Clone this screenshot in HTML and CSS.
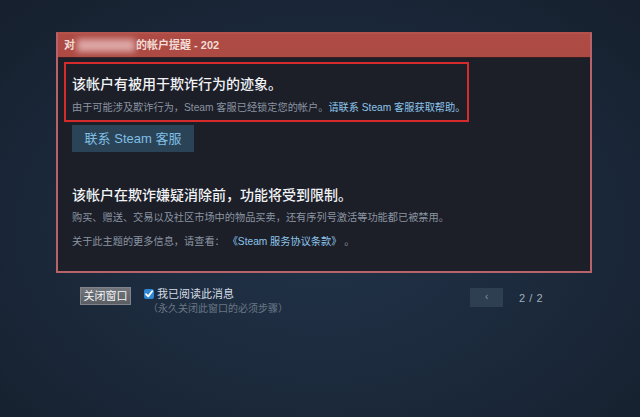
FILE: index.html
```html
<!DOCTYPE html>
<html lang="zh-CN">
<head>
<meta charset="utf-8">
<link rel="stylesheet" href="styles.css">
</head>
<body>
<div class="stage">
  <div class="dialog">
    <div class="dialog-title">对<span class="redact"></span>的帐户提醒 - 202</div>
    <div class="dialog-body">
      <div class="alert-box">
        <div class="heading">该帐户有被用于欺诈行为的迹象。</div>
        <div class="text first">由于可能涉及欺诈行为，Steam 客服已经锁定您的帐户。<span class="link">请联系 Steam 客服获取帮助。</span></div>
      </div>
      <div class="support-btn">联系 Steam 客服</div>
      <div class="heading second">该帐户在欺诈嫌疑消除前，功能将受到限制。</div>
      <div class="text gap-s">购买、赠送、交易以及社区市场中的物品买卖，还有序列号激活等功能都已被禁用。</div>
      <div class="text gap-m">关于此主题的更多信息，请查看： <span class="link">《Steam 服务协议条款》</span> 。</div>
    </div>
  </div>
  <div class="footer">
    <div class="footer-left">
      <div class="close-btn">关闭窗口</div>
      <div class="ack">
        <div class="ack-row">
          <span class="check"><svg width="10" height="10" viewBox="0 0 10 10"><path d="M2 5.2 L4.2 7.4 L8.2 2.2" fill="none" stroke="#ffffff" stroke-width="1.8" stroke-linecap="round" stroke-linejoin="round"/></svg></span>
          <span class="ack-label">我已阅读此消息</span>
        </div>
        <div class="ack-sub">（永久关闭此窗口的必须步骤）</div>
      </div>
    </div>
    <div class="footer-right">
      <div class="prev-btn">‹</div>
      <div class="pager">2 / 2</div>
    </div>
  </div>
</div>
</body>
</html>
```
FILE: styles.css
```css
html, body {
  margin: 0;
  padding: 0;
}
body {
  width: 640px;
  height: 417px;
  overflow: hidden;
  background: radial-gradient(ellipse 70% 75% at 50% 55%, #223348 0%, #1b293b 55%, #16202e 100%);
  font-family: "Liberation Sans", "Noto Sans CJK SC", sans-serif;
}
.stage {
  padding: 32px 0 0 56px;
}
.dialog {
  width: 536px;
  box-sizing: border-box;
  border: 2px solid #b8626a;
  border-top-color: #b3534c;
  background: linear-gradient(180deg, #ad4b44 0%, #a0423c 100%);
}
.dialog-title {
  height: 23px;
  line-height: 23px;
  padding-left: 6px;
  font-size: 11px;
  font-weight: bold;
  color: #f2dcd6;
  display: flex;
  align-items: center;
}
.redact {
  display: inline-block;
  width: 58px;
  height: 13px;
  margin: 0 1px 0 2px;
  background: rgba(236, 196, 196, 0.75);
  filter: blur(3px);
}
.dialog-body {
  height: 214px;
  box-sizing: border-box;
  background: #1c1e28;
  border-top: 1px solid #3a1e22;
  padding-top: 4px;
}
.alert-box {
  width: 405px;
  height: 60px;
  box-sizing: border-box;
  margin-left: 6px;
  border: 2px solid #d62b2c;
  padding: 10px 0 0 6px;
}
.heading {
  font-size: 14px;
  line-height: 20px;
  color: #f1f3f5;
  font-weight: 500;
}
.heading.second {
  margin: 33px 0 0 14px;
}
.text {
  font-size: 10.2px;
  line-height: 14px;
  color: #8a95a1;
  margin-left: 14px;
}
.text.first {
  margin: 7px 0 0 0;
}
.text.gap-s {
  margin-top: 6px;
}
.text.gap-m {
  margin-top: 10px;
}
.link {
  color: #8cc6ea;
}
.support-btn {
  width: 122px;
  height: 27px;
  line-height: 27px;
  margin: 3px 0 0 14px;
  background: #2b4357;
  color: #7fbfe4;
  font-size: 13px;
  text-align: center;
}
.footer {
  width: 463px;
  margin: 14px 0 0 24px;
  display: flex;
  justify-content: space-between;
  align-items: flex-start;
}
.footer-left {
  display: flex;
  align-items: flex-start;
  gap: 13px;
}
.close-btn {
  width: 51px;
  height: 18px;
  box-sizing: border-box;
  line-height: 16px;
  text-align: center;
  font-size: 11px;
  color: #f2f4f6;
  background: linear-gradient(180deg, #72767b 0%, #5a5e63 100%);
  border: 1px solid #80848a;
}
.ack {
  display: flex;
  flex-direction: column;
  padding-top: 1px;
}
.ack-row {
  display: flex;
  align-items: center;
  gap: 3px;
}
.check {
  width: 10px;
  height: 10px;
  border-radius: 2px;
  background: #2f86d4;
  display: flex;
  align-items: center;
  justify-content: center;
}
.ack-label {
  font-size: 11px;
  line-height: 12px;
  color: #d6dde4;
}
.ack-sub {
  margin: 3px 0 0 4px;
  font-size: 10px;
  line-height: 12px;
  color: #6b7886;
}
.footer-right {
  display: flex;
  align-items: center;
  gap: 16px;
  padding-top: 1px;
}
.prev-btn {
  width: 33px;
  height: 19px;
  line-height: 18px;
  text-align: center;
  background: #2e3f52;
  color: #8795a4;
  font-size: 10px;
}
.pager {
  font-size: 11px;
  color: #a3afbb;
  letter-spacing: 0.5px;
}
```
